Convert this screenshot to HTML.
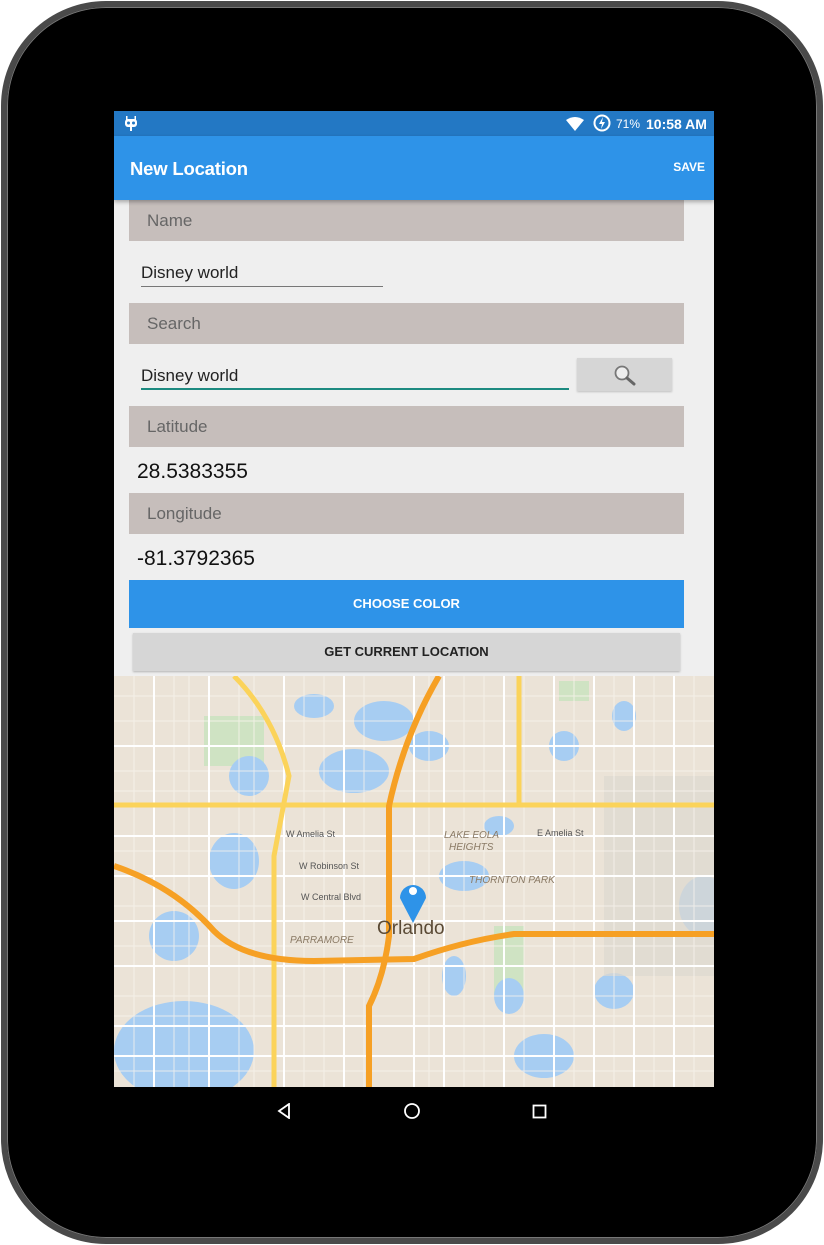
<!DOCTYPE html>
<html><head><meta charset="utf-8"><style>
*{margin:0;padding:0;box-sizing:border-box}
body{width:824px;height:1245px;background:#fff;font-family:"Liberation Sans",sans-serif;position:relative;overflow:hidden}
.dev{position:absolute;left:1px;top:1px;width:822px;height:1243px;border-radius:105px;background:#000;border:6px solid #4a4a4a;box-shadow:inset 0 0 0 1px #777}
.scr{position:absolute;left:114px;top:111px;width:600px;height:1024px;background:#efefef;overflow:hidden}
.sb{height:25px;background:#2378c4;color:#fff;font-size:13px;position:relative}
.ab{height:64px;background:#2e93e8;color:#fff;position:relative;box-shadow:0 2px 4px rgba(0,0,0,.3);z-index:2}
.lab{position:absolute;left:15px;width:555px;height:41px;background:#c6bebb;color:#666;font-size:17px;padding:11px 0 0 18px}
.val{position:absolute;left:27px;font-size:17px;color:#222}
.num{position:absolute;left:23px;font-size:21px;color:#111}
</style></head><body>
<div class="dev"></div>
<div class="scr">
 <div class="sb">
  <svg style="position:absolute;left:10px;top:5px" width="14" height="15" viewBox="0 0 14 15"><rect x="1" y="3" width="12" height="8" rx="3" fill="#fff"/><circle cx="4.5" cy="7" r="1.5" fill="#2378c4"/><circle cx="9.5" cy="7" r="1.5" fill="#2378c4"/><rect x="6" y="11" width="2" height="4" fill="#fff"/><rect x="2" y="0" width="1.5" height="4" fill="#fff"/><rect x="10.5" y="0" width="1.5" height="4" fill="#fff"/></svg>
  <svg style="position:absolute;left:452px;top:6px" width="18" height="14" viewBox="0 0 18 14"><path d="M0 3 Q9 -3 18 3 L9 14Z" fill="#fff"/></svg>
  <svg style="position:absolute;left:479px;top:3px" width="18" height="18" viewBox="0 0 18 18"><circle cx="9" cy="9" r="7.5" fill="none" stroke="#fff" stroke-width="2"/><path d="M10 3 L6 10 H9 L8 15 L12 8 H9Z" fill="#fff"/></svg>
  <span style="position:absolute;left:502px;top:6px;font-size:12px">71%</span>
  <span style="position:absolute;left:532px;top:5px;font-size:14px;font-weight:bold">10:58 AM</span>
 </div>
 <div class="ab">
  <span style="position:absolute;left:16px;top:22px;font-size:18.5px;font-weight:bold;letter-spacing:-0.2px">New Location</span>
  <span style="position:absolute;right:9px;top:24px;font-size:12px;font-weight:bold">SAVE</span>
 </div>
 <div class="lab" style="top:89px;height:41px">Name</div>
 <div class="val" style="top:152px">Disney world</div>
 <div style="position:absolute;left:27px;top:175px;width:242px;height:1px;background:#777"></div>
 <div class="lab" style="top:192px">Search</div>
 <div class="val" style="top:255px">Disney world</div>
 <div style="position:absolute;left:27px;top:277px;width:428px;height:2px;background:#1c8a80"></div>
 <div style="position:absolute;left:463px;top:247px;width:95px;height:33px;background:#d6d6d6;box-shadow:0 1px 2px rgba(0,0,0,.2)">
  <svg style="position:absolute;left:36px;top:6px" width="24" height="22" viewBox="0 0 24 22"><circle cx="9" cy="9" r="6.5" fill="#eee" stroke="#777" stroke-width="1.8"/><path d="M14 14 L21 20" stroke="#666" stroke-width="3" stroke-linecap="round"/></svg>
 </div>
 <div class="lab" style="top:295px">Latitude</div>
 <div class="num" style="top:349px">28.5383355</div>
 <div class="lab" style="top:382px">Longitude</div>
 <div class="num" style="top:436px">-81.3792365</div>
 <div style="position:absolute;left:15px;top:469px;width:555px;height:48px;background:#2e93e8;color:#fff;font-size:13px;font-weight:bold;text-align:center;line-height:48px">CHOOSE COLOR</div>
 <div style="position:absolute;left:19px;top:522px;width:547px;height:38px;background:#d6d6d6;color:#222;font-size:13px;font-weight:bold;text-align:center;line-height:38px;box-shadow:0 1px 2px rgba(0,0,0,.25)">GET CURRENT LOCATION</div>
 <svg style="position:absolute;left:0;top:565px" width="600" height="411" viewBox="0 0 600 411">
  <rect width="600" height="411" fill="#ebe3d7"/>
  <g fill="#cfe3c3"><rect x="90" y="40" width="60" height="50"/><rect x="380" y="250" width="30" height="70"/><rect x="445" y="5" width="30" height="20"/></g>
  <g fill="#a7cdf2">
   <ellipse cx="200" cy="30" rx="20" ry="12"/><ellipse cx="270" cy="45" rx="30" ry="20"/><ellipse cx="240" cy="95" rx="35" ry="22"/><ellipse cx="135" cy="100" rx="20" ry="20"/><ellipse cx="315" cy="70" rx="20" ry="15"/><ellipse cx="120" cy="185" rx="25" ry="28"/><ellipse cx="350" cy="200" rx="25" ry="15"/><ellipse cx="60" cy="260" rx="25" ry="25"/><ellipse cx="70" cy="375" rx="70" ry="50"/><ellipse cx="340" cy="300" rx="12" ry="20"/><ellipse cx="395" cy="320" rx="15" ry="18"/><ellipse cx="430" cy="380" rx="30" ry="22"/><ellipse cx="500" cy="315" rx="20" ry="18"/><ellipse cx="450" cy="70" rx="15" ry="15"/><ellipse cx="510" cy="40" rx="12" ry="15"/><ellipse cx="590" cy="230" rx="25" ry="30"/><ellipse cx="385" cy="150" rx="15" ry="10"/>
  </g>
  <rect x="490" y="100" width="110" height="200" fill="#ddd8d0" opacity=".7"/>
  <g stroke="#f7f3ee" stroke-width="1" fill="none" opacity=".8">
   <path d="M0 20H600M0 45H600M0 95H600M0 115H600M0 175H600M0 230H600M0 270H600M0 320H600M0 340H600M0 395H600M20 0V411M60 0V411M75 0V411M125 0V411M140 0V411M190 0V411M210 0V411M250 0V411M315 0V411M350 0V411M370 0V411M410 0V411M460 0V411M500 0V411M540 0V411M580 0V411"/>
  </g>
  <g stroke="#fff" stroke-width="2" fill="none">
   <path d="M0 160H600M0 245H600M0 290H600M0 350H600M0 380H600M40 0V411M95 0V411M170 0V411M230 0V411M300 0V411M330 0V411M390 0V411M440 0V411M480 0V411M520 0V411M560 0V411M0 70H600M0 200H600"/>
  </g>
  <g stroke="#fbd35a" stroke-width="5" fill="none">
   <path d="M0 129H600"/><path d="M405 0V129"/><path d="M120 0 Q160 40 175 100 L160 180 V411"/>
  </g>
  <g stroke="#f6a024" stroke-width="6" fill="none">
   <path d="M325 0 Q290 60 275 130 L275 260 Q270 300 255 330 V411"/>
   <path d="M0 190 Q60 210 100 255 Q130 285 200 285 L300 283 Q350 265 400 258 L600 258"/>
  </g>
  <g font-size="9" fill="#555" font-family="Liberation Sans">
   <text x="172" y="161">W Amelia St</text><text x="185" y="193">W Robinson St</text><text x="187" y="224">W Central Blvd</text><text x="423" y="160">E Amelia St</text>
  </g>
  <g font-size="10" font-style="italic" fill="#8a7a65" font-family="Liberation Sans"><text x="330" y="162">LAKE EOLA</text><text x="335" y="174">HEIGHTS</text><text x="355" y="207">THORNTON PARK</text><text x="176" y="267">PARRAMORE</text></g>
  <text x="263" y="258" font-size="19" fill="#5a4a35" font-family="Liberation Sans">Orlando</text>
  <path d="M299 247 Q290 230 286 222 A13 13 0 1 1 312 222 Q308 230 299 247Z" fill="#2e93e8"/><circle cx="299" cy="215" r="4" fill="#fff"/>
 </svg>
 <div style="position:absolute;left:0;top:976px;width:600px;height:48px;background:#000">
  <svg style="position:absolute;left:162px;top:16px" width="16" height="16" viewBox="0 0 16 16"><path d="M13 1 L3 8 L13 15Z" fill="none" stroke="#fff" stroke-width="1.8"/></svg>
  <svg style="position:absolute;left:289px;top:16px" width="18" height="18" viewBox="0 0 18 18"><circle cx="9" cy="8" r="7" fill="none" stroke="#fff" stroke-width="1.8"/></svg>
  <svg style="position:absolute;left:418px;top:17px" width="16" height="16" viewBox="0 0 16 16"><rect x="1.5" y="1.5" width="12" height="12" fill="none" stroke="#fff" stroke-width="1.8"/></svg>
 </div>
</div>
</body></html>
